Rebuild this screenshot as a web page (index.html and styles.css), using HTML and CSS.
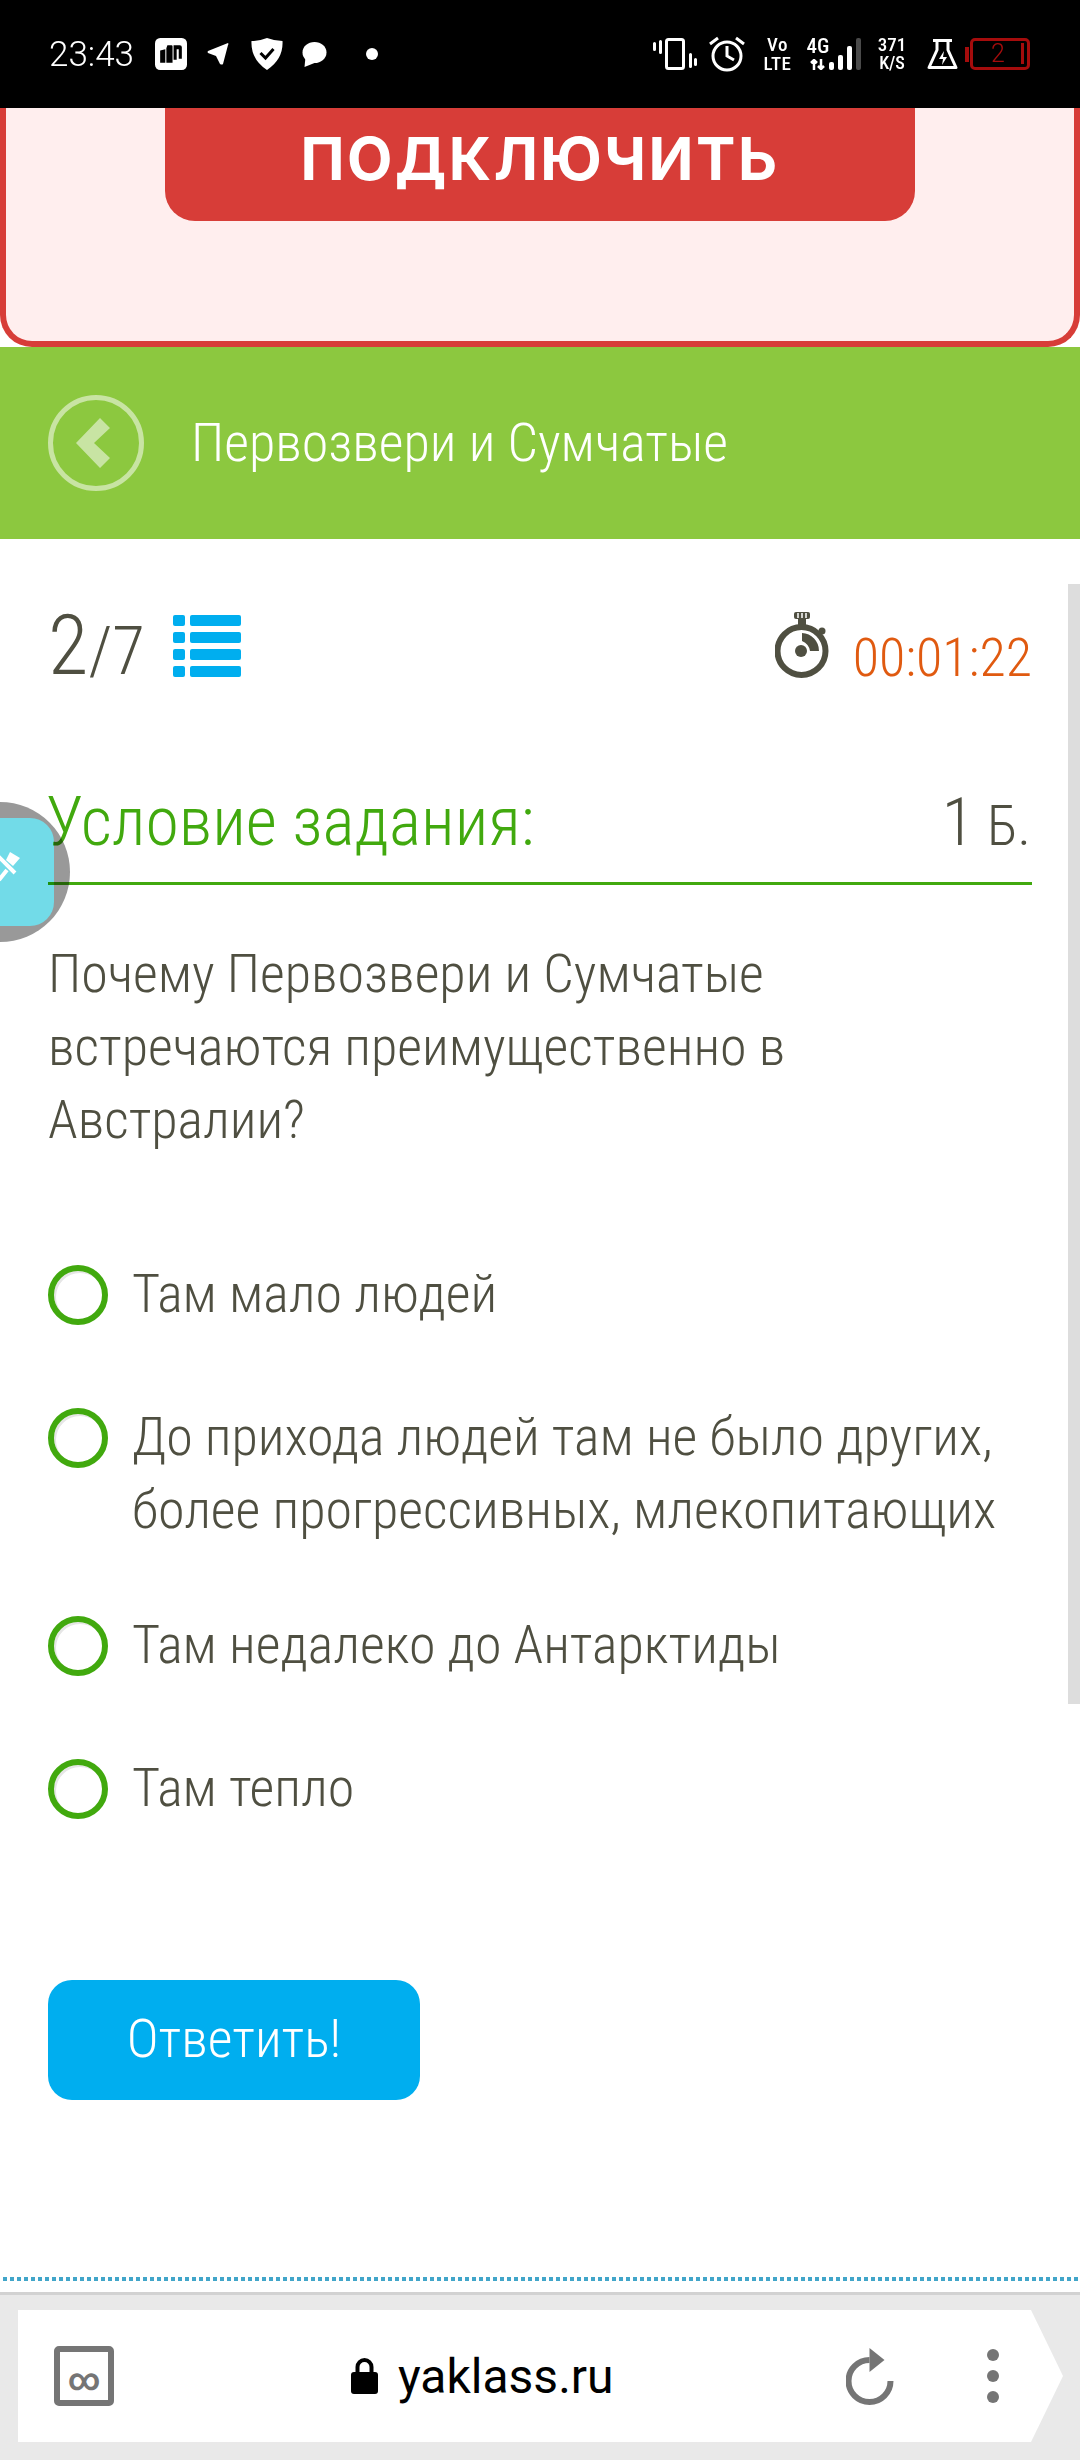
FILE: index.html
```html
<!DOCTYPE html>
<html>
<head>
	<title>Первозвери и Сумчатые</title>
	<meta name="viewport" content="width=device-width,initial-scale=1.0" />
	<link rel="stylesheet" href="styles.css">
</head>
<body>
	<div class="status">
		<div class="status-left">
			<span class="clock">23:43</span>
			<svg class="ic" width="32" height="32" viewBox="0 0 31 31"><rect width="31" height="31" rx="5" fill="#fff"/><path d="M5 12l5-1v13H5zM11 10l1-3h4q1 0 1 1v16h-6zM18 7h6q2 0 2 2v11h-3V11h-2v10h-3z" fill="#000"/></svg>
			<svg class="ic ic-plane" width="22" height="22" viewBox="0 0 22 22"><path d="M21 0L1 8q-1 1 0 2l8 3 4 8q2 1 3 0l5-19q1-1 0-2z" fill="#fff"/></svg>
			<svg class="ic ic-shield" width="32" height="32" viewBox="0 0 31 32"><path d="M15.500 0q8 3 15.500 3 1 18-15.500 29Q-1 21 0 3q8 0 15.500-3z" fill="#fff"/><path d="M9 15l5 5 8-9" fill="none" stroke="#000" stroke-width="3"/></svg>
			<svg class="ic" width="25" height="25" viewBox="0 0 24 25"><ellipse cx="12" cy="10.500" rx="12" ry="10.500" fill="#fff"/><path d="M3 15l-1 10 10-4z" fill="#fff"/></svg>
			<span class="dot"></span>
		</div>
		<div class="status-right">
			<svg width="44" height="36" viewBox="0 0 44 36"><rect x="13.500" y="3.500" width="17" height="29" rx="2" fill="none" stroke="#fff" stroke-width="3"/><path d="M1.500 7.500v6M7.500 5.500v11M37.500 18.500v12M42.500 23.500v5" stroke="#fff" stroke-width="3" stroke-linecap="round"/></svg>
			<svg class="st-clock" width="36" height="36" viewBox="0 0 36 36"><circle cx="18" cy="20" r="14" fill="none" stroke="#fff" stroke-width="3"/><path d="M18 10v10l7 4M1 8l8-6M35 8l-8-6" fill="none" stroke="#fff" stroke-width="3"/></svg>
			<div class="st-two st-vo"><span>Vo</span><span>LTE</span></div>
			<div class="st-4g"><span>4G</span><svg width="16" height="11" viewBox="0 0 16 11"><path d="M4 11V2M1 4l3-3 3 3M11 0v9M8 7l3 3 3-3" fill="none" stroke="#fff" stroke-width="2.500"/></svg></div>
			<svg class="st-bars" width="32" height="32" viewBox="0 0 32 32"><rect x="0" y="24" width="5" height="8" rx="2" fill="#fff"/><rect x="9" y="17" width="5" height="15" rx="2" fill="#fff"/><rect x="18" y="8" width="5" height="24" rx="2" fill="#fff"/><rect x="27" y="0" width="5" height="32" rx="2" fill="#4a4a4a"/></svg>
			<div class="st-two st-speed"><span>371</span><span class="st-ks">K/S</span></div>
			<svg class="st-flask" width="31" height="30" viewBox="0 0 31 30"><path d="M6 1.500h19M10 2v9L2 28.500h27L21 11V2" fill="none" stroke="#fff" stroke-width="3" stroke-linejoin="round"/><path d="M17 12l-5 8h4l-1 6 5-8h-4z" fill="#fff"/></svg>
			<div class="batt"><span class="batt-cap"></span><div class="batt-body"><span>2</span><i></i></div></div>
		</div>
	</div>

	<div class="promo">
		<div class="promo-btn">ПОДКЛЮЧИТЬ</div>
	</div>

	<div class="topic">
		<svg class="back" width="96" height="96" viewBox="0 0 96 96"><circle cx="48" cy="48" r="45.500" fill="none" stroke="#c8e4a3" stroke-width="5"/><path d="M52 23L28 48l24 25 10-10-16-15 16-15z" fill="#c8e4a3"/></svg>
		<span class="topic-name">Первозвери и Сумчатые</span>
	</div>

	<div class="main">
		<div class="scrollbar"></div>
		<div class="head-row">
			<div class="counter">
				<span class="cnt-big">2</span><span class="cnt-small">/7</span>
				<svg class="list-ic" width="68" height="63" viewBox="0 0 68 63"><g fill="#00aeef"><rect x="0" y="0" width="12" height="11" rx="2"/><rect x="17" y="0" width="51" height="11" rx="2"/><rect x="0" y="17" width="12" height="11" rx="2"/><rect x="17" y="17" width="51" height="11" rx="2"/><rect x="0" y="34" width="12" height="11" rx="2"/><rect x="17" y="34" width="51" height="11" rx="2"/><rect x="0" y="51" width="12" height="11" rx="2"/><rect x="17" y="51" width="51" height="11" rx="2"/></g></svg>
			</div>
			<div class="timer">
				<svg class="timer-ic" width="54" height="66" viewBox="0 0 54 66"><g fill="#4f4f41"><rect x="19" y="0" width="16" height="7" rx="2"/><rect x="23" y="7" width="8" height="7"/><circle cx="47" cy="19" r="3.500"/><circle cx="26" cy="39" r="6"/><path d="M27 21a18 18 0 0 1 17 18H35q-1-7-8-10z"/></g><circle cx="26.500" cy="39" r="24" fill="none" stroke="#4f4f41" stroke-width="6"/><path d="M23 1v5M27 1v5M31 1v5" stroke="#fff" stroke-width="1.500"/></svg>
				<span class="time">00:01:22</span>
			</div>
		</div>

		<div class="task-head">
			<span class="task-title">Условие задания:</span>
			<span class="points"><span class="pts-big">1</span> Б.</span>
		</div>

		<div class="question">Почему Первозвери и Сумчатые встречаются преимущественно в Австралии?</div>

		<div class="answers">
			<div class="answer"><span class="radio"></span><span class="a-text">Там мало людей</span></div>
			<div class="answer two-line"><span class="radio"></span><span class="a-text">До прихода людей там не было других, более прогрессивных, млекопитающих</span></div>
			<div class="answer"><span class="radio"></span><span class="a-text">Там недалеко до Антарктиды</span></div>
			<div class="answer"><span class="radio"></span><span class="a-text">Там тепло</span></div>
		</div>

		<div class="submit">Ответить!</div>

		<div class="float-btn"><div class="float-in"><svg width="22" height="40" viewBox="0 0 22 40"><path d="M10 0l10 6-7 8-7-6z" fill="#fff"/><path d="M-2 4l17 17M7 18l-8 10" fill="none" stroke="#fff" stroke-width="4"/></svg></div></div>
	</div>

	<div class="dotted"></div>
	<div class="browser">
		<div class="urlbar">
			<div class="tab-box">∞</div>
			<div class="url">
				<svg width="27" height="36" viewBox="0 0 27 36"><path d="M6.500 15V9a7 7 0 0 1 14 0v6" fill="none" stroke="#000" stroke-width="4"/><rect x="0" y="14" width="27" height="22" rx="3" fill="#000"/></svg>
				<span>yaklass.ru</span>
			</div>
			<svg class="reload" width="48" height="57" viewBox="0 0 47 57"><path d="M23 12A21 21 0 1 0 44 33" fill="none" stroke="#757575" stroke-width="6"/><path d="M23 0l15 12-15 12z" fill="#757575"/></svg>
			<div class="dots"><span></span><span></span><span></span></div>
		</div>
	</div>
</body>
</html>
```

FILE: styles.css
```css
html, body {
	margin: 0;
	padding: 0;
	background-color: #ffffff;
}
body {
	width: 1080px;
	height: 2460px;
	overflow: hidden;
	font-family: Roboto, "Liberation Sans", sans-serif;
	display: flex;
	flex-direction: column;
}

/* status bar */
.status {
	height: 108px;
	background-color: #000000;
	color: #ffffff;
	display: flex;
	justify-content: space-between;
	align-items: center;
	flex-shrink: 0;
}
.status-left {
	display: flex;
	align-items: center;
	padding-left: 49px;
}
.clock {
	font-size: 35px;
	font-weight: 300;
	margin-right: 21px;
}
.ic {
	margin-right: 20px;
}
.ic-plane {
	margin-right: 22px;
}
.ic-shield {
	margin-right: 19px;
}
.dot {
	width: 12px;
	height: 12px;
	border-radius: 50%;
	background-color: #ffffff;
	margin-left: 19px;
}
.status-right {
	display: flex;
	align-items: center;
	padding-right: 50px;
}
.st-clock {
	margin-left: 12px;
}
.st-two {
	display: flex;
	flex-direction: column;
	align-items: center;
	font-weight: 500;
	font-stretch: 85%;
	font-size: 19px;
	line-height: 18px;
}
.st-vo {
	width: 29px;
	margin-left: 18px;
	line-height: 19px;
	letter-spacing: 0.500px;
}
.st-4g {
	width: 24px;
	margin-left: 14px;
	display: flex;
	flex-direction: column;
	align-items: center;
	gap: 4px;
	font-size: 21px;
	font-weight: 500;
	font-stretch: 85%;
	line-height: 17px;
}
.st-bars {
	margin-left: -1px;
}
.st-speed {
	width: 30px;
	margin-left: 16px;
}
.st-ks {
	font-size: 18px;
}
.st-flask {
	margin-left: 20px;
}
.batt {
	display: flex;
	align-items: center;
	margin-left: 7px;
}
.batt-cap {
	width: 4px;
	height: 15px;
	background-color: #a50c0c;
	margin-right: 1px;
}
.batt-body {
	width: 60px;
	height: 32px;
	box-sizing: border-box;
	border: 3px solid #a50c0c;
	border-radius: 5px;
	color: #a50c0c;
	font-size: 25px;
	font-weight: 300;
	line-height: 26px;
	position: relative;
	text-align: center;
}
.batt-body span {
	margin-right: 4px;
}
.batt-body i {
	position: absolute;
	right: 3px;
	top: 2px;
	width: 3px;
	height: 21px;
	background-color: #a50c0c;
}

/* red banner */
.promo {
	height: 239px;
	flex-shrink: 0;
	box-sizing: border-box;
	background-color: #ffeeee;
	border: 6px solid #d73d38;
	border-top: 0;
	border-radius: 0 0 32px 32px;
	display: flex;
	justify-content: center;
}
.promo-btn {
	width: 750px;
	height: 113px;
	background-color: #d73d38;
	border-radius: 0 0 30px 30px;
	color: #ffffff;
	font-family: Inter, "Open Sans", sans-serif;
	font-weight: 700;
	font-size: 59px;
	letter-spacing: 2.500px;
	line-height: 101px;
	text-align: center;
}

/* green bar */
.topic {
	height: 192px;
	background-color: #8cc83f;
	display: flex;
	align-items: center;
	padding-left: 48px;
	flex-shrink: 0;
}
.topic-name {
	color: #ffffff;
	font-size: 54px;
	font-weight: 300;
	font-stretch: 75%;
	margin: 0 0 2px 47px;
}

/* content */
.main {
	flex: 1;
	position: relative;
	padding: 0 48px;
	color: #4f4f41;
	font-weight: 300;
	font-stretch: 75%;
}
.scrollbar {
	position: absolute;
	right: 0;
	top: 45px;
	width: 12px;
	height: 1120px;
	background-color: #dddddd;
}
.head-row {
	display: flex;
	justify-content: space-between;
	align-items: flex-end;
	padding-top: 62px;
}
.counter {
	display: flex;
	align-items: baseline;
}
.cnt-big {
	font-size: 83px;
	line-height: 90px;
}
.cnt-small {
	font-size: 67px;
	line-height: 90px;
}
.list-ic {
	align-self: flex-end;
	margin: 0 0 18px 28px;
}
.timer {
	display: flex;
	align-items: flex-end;
	margin-bottom: 8px;
}
.timer-ic {
	margin-bottom: 10px;
}
.time {
	color: #e05a10;
	font-size: 54px;
	line-height: 60px;
	margin-left: 24px;
}
.task-head {
	margin-top: 84px;
	height: 105px;
	box-sizing: border-box;
	padding-bottom: 18px;
	border-bottom: 3px solid #41a90e;
	display: flex;
	justify-content: space-between;
	align-items: baseline;
}
.task-title {
	color: #41a90e;
	font-size: 68px;
	line-height: 84px;
	margin-left: -2px;
}
.points {
	font-size: 56px;
	line-height: 84px;
	padding-right: 1px;
}
.pts-big {
	font-size: 67px;
}
.question {
	margin-top: 52px;
	font-size: 54px;
	line-height: 73px;
}
.answers {
	margin-top: 101px;
}
.answer {
	display: flex;
	align-items: flex-start;
	margin-bottom: 70px;
	font-size: 54px;
	line-height: 73px;
}
.two-line {
	margin-bottom: 62px;
}
.radio {
	width: 60px;
	height: 60px;
	box-sizing: border-box;
	border: 6px solid #41a90e;
	border-radius: 50%;
	box-shadow: inset 2px 2px 0 #e6e6e6;
	flex-shrink: 0;
	margin: 8px 24px 0 0;
}
.a-text {
	flex: 1;
}
.submit {
	margin-top: 156px;
	width: 372px;
	height: 120px;
	background-color: #00aeef;
	border-radius: 24px;
	color: #ffffff;
	font-size: 54px;
	line-height: 118px;
	text-align: center;
}
.float-btn {
	position: absolute;
	left: -70px;
	top: 263px;
	width: 140px;
	height: 140px;
	border-radius: 50%;
	background-color: #999999;
	mix-blend-mode: multiply;
	display: flex;
	align-items: center;
}
.float-in {
	width: 124px;
	height: 108px;
	border-radius: 24px;
	background-color: #72dbe8;
	display: flex;
	align-items: center;
	padding-left: 70px;
	box-sizing: border-box;
}

/* browser bar */
.dotted {
	height: 4px;
	margin-bottom: 11px;
	flex-shrink: 0;
	background: repeating-linear-gradient(to right, #ffffff 0, #ffffff 3px, #41a5c9 3px, #41a5c9 7px);
}
.browser {
	height: 168px;
	flex-shrink: 0;
	box-sizing: border-box;
	background-color: #e9e9e9;
	border-top: 3px solid #d2d2d2;
	padding-top: 15px;
	padding-left: 18px;
}
.urlbar {
	width: 1045px;
	height: 132px;
	background-color: #ffffff;
	clip-path: polygon(0 0, 1013px 0, 1045px 66px, 1013px 132px, 0 132px);
	display: flex;
	align-items: center;
}
.tab-box {
	width: 60px;
	height: 60px;
	box-sizing: border-box;
	border: 6px solid #757575;
	border-radius: 5px;
	margin-left: 36px;
	color: #757575;
	font-size: 31px;
	font-weight: 700;
	line-height: 56px;
	text-align: center;
}
.url {
	flex: 1;
	display: flex;
	align-items: center;
	margin-left: 237px;
	font-size: 48px;
	color: #000000;
}
.url span {
	margin-left: 20px;
}
.reload {
	margin-right: 93px;
}
.dots {
	display: flex;
	flex-direction: column;
	gap: 9px;
	margin-right: 64px;
}
.dots span {
	width: 12px;
	height: 12px;
	border-radius: 50%;
	background-color: #757575;
}
```
